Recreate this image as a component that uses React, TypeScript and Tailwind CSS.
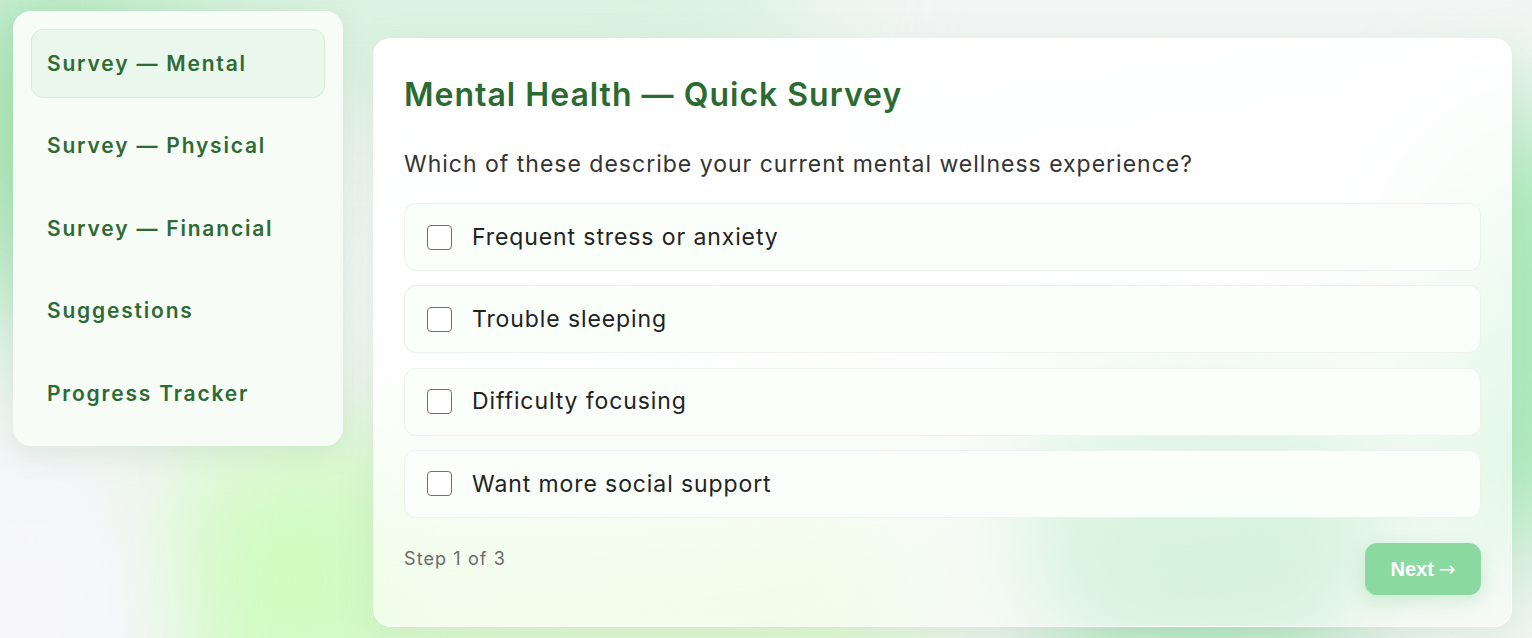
import React from "react";

const navItems = [
  "Survey — Mental",
  "Survey — Physical",
  "Survey — Financial",
  "Suggestions",
  "Progress Tracker",
];

const options = [
  "Frequent stress or anxiety",
  "Trouble sleeping",
  "Difficulty focusing",
  "Want more social support",
];

export default function App() {
  return (
    <div className="relative min-h-[638px] w-full overflow-hidden bg-[#f3f6f5] font-['Inter','Noto_Sans',sans-serif]">
      {/* decorative background blobs */}
      <div className="pointer-events-none absolute inset-0">
        <div className="absolute left-[-120px] top-[-60px] h-[380px] w-[360px] rounded-full bg-[#9fe3ae] blur-[70px] opacity-85" />
        <div className="absolute left-[120px] top-[-120px] h-[200px] w-[700px] rounded-full bg-[#c9f0d2] blur-[70px] opacity-70" />
        <div className="absolute left-[150px] top-[430px] h-[300px] w-[320px] rounded-full bg-[#d0fbc0] blur-[60px]" />
        <div className="absolute left-[-100px] top-[470px] h-[260px] w-[260px] rounded-full bg-[#f6f6fb] blur-[50px]" />
        <div className="absolute right-[-120px] top-[110px] h-[440px] w-[220px] rounded-full bg-[#a9eab8] blur-[60px]" />
        <div className="absolute left-[1010px] top-[370px] h-[280px] w-[380px] rounded-full bg-[#9ddfae] blur-[50px]" />
        <div className="absolute left-[380px] top-[480px] h-[200px] w-[560px] rounded-full bg-[#dcf9cc] blur-[60px]" />
      </div>

      <div className="relative flex items-start gap-[30px] pl-[13px] pr-[20px] pt-[11px] pb-[11px]">
        {/* Sidebar */}
        <aside className="flex w-[330px] shrink-0 flex-col gap-[13.5px] rounded-[18px] bg-[#f7fdf6] p-[18px] shadow-[0_8px_30px_rgba(60,120,70,0.12)]">
          {navItems.map((item, i) => (
            <div
              key={item}
              className={
                i === 0
                  ? "flex h-[69px] items-center rounded-[12px] border border-[#d5efd9] bg-[#eaf7ec] px-[15px] text-[21px] font-semibold tracking-[1.8px] text-[#2e6b34]"
                  : "flex h-[69px] items-center rounded-[12px] border border-transparent px-[15px] text-[21px] font-semibold tracking-[1.8px] text-[#2e6b34]"
              }
            >
              {item}
            </div>
          ))}
        </aside>

        {/* Main card */}
        <main className="mt-[27px] flex-1 rounded-[18px] border border-white/70 bg-[linear-gradient(172deg,rgba(255,255,255,0.97)_0%,rgba(255,255,255,0.88)_40%,rgba(252,255,250,0.5)_100%)] px-[30px] pb-[31px] pt-[36px] shadow-[0_10px_40px_rgba(60,120,70,0.10)]">
          <h1 className="text-[32px] font-semibold leading-[40px] tracking-[1px] text-[#2b6a31]">
            Mental Health — Quick Survey
          </h1>
          <p className="mt-[33px] text-[23px] leading-[32px] tracking-[1px] text-[#333333]">
            Which of these describe your current mental wellness experience?
          </p>
          <div className="mt-[23px] flex flex-col gap-[14.3px]">
            {options.map((opt) => (
              <label
                key={opt}
                className="flex h-[68px] items-center gap-[20px] rounded-[12px] border border-[#eef2ee] bg-[#fbfffb]/95 px-[22px]"
              >
                <span className="h-[25px] w-[25px] shrink-0 rounded-[4px] border-[1.5px] border-[#707070] bg-white" />
                <span className="text-[23px] tracking-[0.9px] text-[#222222]">{opt}</span>
              </label>
            ))}
          </div>
          <div className="mt-[25px] flex items-start justify-between">
            <span className="pt-[3px] text-[18px] leading-[26px] tracking-[1.1px] text-[#6b6b6b]">
              Step 1 of 3
            </span>
            <button className="flex h-[52px] w-[116px] items-center justify-center gap-[5px] rounded-[12px] bg-[#8ad9a0] font-['Liberation_Sans',Arial,sans-serif] text-[20px] font-bold text-white shadow-[0_6px_18px_rgba(100,190,120,0.25)]">
              <span>Next</span>
              <span className="font-['DejaVu_Sans',sans-serif] text-[20px] font-normal">→</span>
            </button>
          </div>
        </main>
      </div>
    </div>
  );
}
